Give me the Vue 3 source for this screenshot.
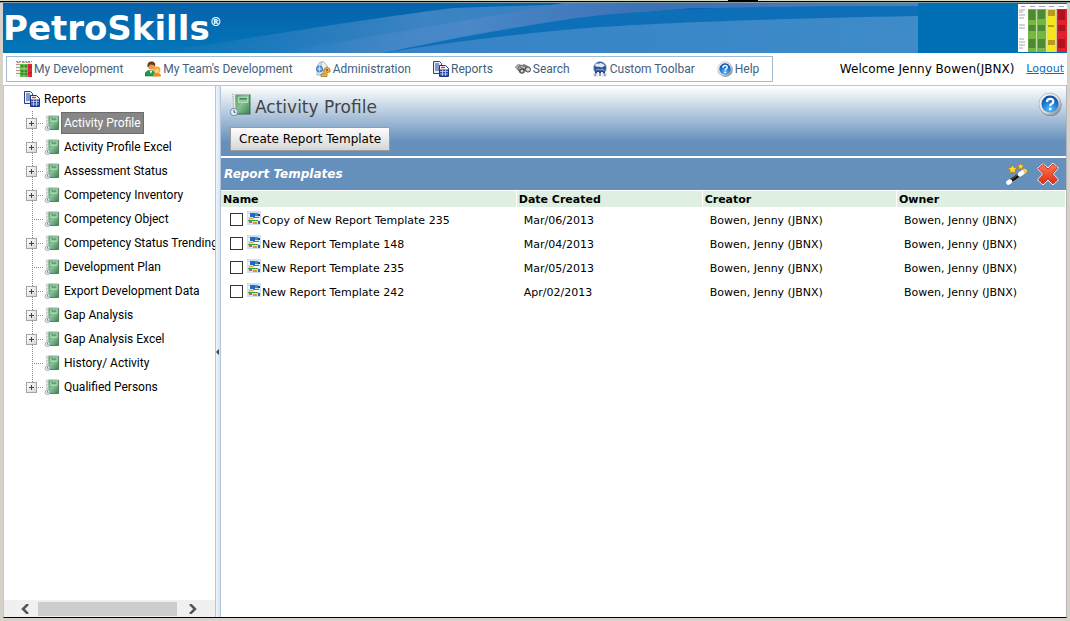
<script setup>
import { ref } from 'vue'

const menu = [
  { label: 'My Development', icon: 'matrix' },
  { label: "My Team's Development", icon: 'team' },
  { label: 'Administration', icon: 'admin' },
  { label: 'Reports', icon: 'reports' },
  { label: 'Search', icon: 'search' },
  { label: 'Custom Toolbar', icon: 'custom' },
  { label: 'Help', icon: 'help' },
]

const tree = [
  { label: 'Activity Profile', more: true },
  { label: 'Activity Profile Excel', more: true },
  { label: 'Assessment Status', more: true },
  { label: 'Competency Inventory', more: true },
  { label: 'Competency Object', more: false },
  { label: 'Competency Status Trending', more: true },
  { label: 'Development Plan', more: false },
  { label: 'Export Development Data', more: true },
  { label: 'Gap Analysis', more: true },
  { label: 'Gap Analysis Excel', more: true },
  { label: 'History/ Activity', more: false },
  { label: 'Qualified Persons', more: true },
]
const selected = ref('Activity Profile')

const rows = ref([
  { name: 'Copy of New Report Template 235', date: 'Mar/06/2013', checked: false },
  { name: 'New Report Template 148', date: 'Mar/04/2013', checked: false },
  { name: 'New Report Template 235', date: 'Mar/05/2013', checked: false },
  { name: 'New Report Template 242', date: 'Apr/02/2013', checked: false },
])
const person = 'Bowen, Jenny (JBNX)'
</script>

<template>
  <div class="frame">
    <svg class="defs" width="0" height="0" aria-hidden="true">
      <defs>
        <linearGradient id="g-book" x1="0" y1="0" x2="1" y2="1">
          <stop offset="0" stop-color="#4f9a68" /><stop offset=".5" stop-color="#86bf92" /><stop offset="1" stop-color="#3a8253" />
        </linearGradient>
        <radialGradient id="g-blue" cx=".5" cy=".8" r=".8">
          <stop offset="0" stop-color="#5cc0fa" /><stop offset=".6" stop-color="#1b75d0" /><stop offset="1" stop-color="#0d4a9c" />
        </radialGradient>
        <linearGradient id="g-ring" x1="0" y1="0" x2="1" y2="1">
          <stop offset="0" stop-color="#ffffff" /><stop offset=".6" stop-color="#d5d9de" /><stop offset="1" stop-color="#6f767e" />
        </linearGradient>
        <linearGradient id="g-red" x1="0" y1="0" x2="0" y2="1">
          <stop offset="0" stop-color="#ff7a58" /><stop offset="1" stop-color="#e02a10" />
        </linearGradient>
        <linearGradient id="g-s1" x1="0" y1="0" x2="0" y2="1">
          <stop offset="0" stop-color="#0562ac" /><stop offset="1" stop-color="#0376b8" />
        </linearGradient>
        <linearGradient id="g-s2" x1="0" y1="0" x2="1" y2="0">
          <stop offset="0" stop-color="#3c84c4" stop-opacity="0" /><stop offset=".5" stop-color="#3c84c4" /><stop offset="1" stop-color="#2a7cc0" />
        </linearGradient>
        <linearGradient id="g-s3" x1="0" y1="0" x2="1" y2="0">
          <stop offset="0" stop-color="#4a8aca" stop-opacity="0" /><stop offset=".3" stop-color="#4a88c8" /><stop offset=".6" stop-color="#3a70b4" /><stop offset="1" stop-color="#4b7fc0" />
        </linearGradient>
        <linearGradient id="g-s4" x1="0" y1="0" x2="1" y2="0">
          <stop offset="0" stop-color="#3583c6" /><stop offset="1" stop-color="#3f8bc9" />
        </linearGradient>
      </defs>

      <symbol id="i-matrix" viewBox="0 0 16 16">
        <rect width="16" height="16" fill="#f3efec" />
        <path d="M0 3.500h4M0 6.500h4M0 9.500h4M0 12.500h4M1 1.500h3M6 1.500h3M10 1.500h4" stroke="#b09a98" />
        <rect x="4" y="3" width="8" height="13" fill="#63b548" />
        <path d="M5 5h6M5 10h6M5 13h6" stroke="#2c7a2c" stroke-width="1.500" />
        <path d="M8 3v13M4 8h8" stroke="#a7dc7c" stroke-width=".6" />
        <rect x="12" y="3" width="4" height="13" fill="#e0263a" />
        <path d="M12.500 6h3M12.500 12h3" stroke="#a3122a" />
        <path d="M0 .5h16" stroke="#a08a84" stroke-dasharray="2 1" />
      </symbol>

      <symbol id="i-team" viewBox="0 0 16 16">
        <path d="M0 15V12l3-2.500h5l2.500 3V15z" fill="#1f9a45" stroke="#0e6a2c" stroke-width=".5" />
        <path d="M4.500 9.500h3L6 13z" fill="#f5e7d0" />
        <circle cx="6.500" cy="5.500" r="3.300" fill="#e79a55" />
        <path d="M2.500 6C2 2 4 .5 6.500.5S11 2 10 6L9 4 5 3.500 3.500 6z" fill="#6d3717" />
        <path d="M8 15.500c0-3 1-4 3.500-4s4.500 1 4.500 4z" fill="#f08b1e" />
        <circle cx="12" cy="9" r="3.400" fill="#f4ac2e" />
        <circle cx="12" cy="10" r="2.100" fill="#fbcf96" />
      </symbol>

      <symbol id="i-admin" viewBox="0 0 16 16">
        <path d="M2 14V5l3-4h3v13z" fill="#dbe4ef" stroke="#8b9bb0" stroke-width=".7" />
        <path d="M6 2.500 8.500.5l3.500 4v5H7z" fill="#eef2f7" stroke="#8b98a9" stroke-width=".7" />
        <circle cx="4.500" cy="8" r="3" fill="#58a8ea" stroke="#2669b4" stroke-width=".8" />
        <path d="M4.500 5.500v5M2.500 8h4M9 3v5" stroke="#d8efff" stroke-width=".8" />
        <path d="m9 8 3-2 3 2v3l-3 .5v4H6V13h3z" fill="#eeb13f" stroke="#9a6a20" stroke-width=".7" />
        <circle cx="12" cy="9" r="1" fill="#7b5520" />
      </symbol>

      <symbol id="i-reports" viewBox="0 0 16 16">
        <path d="M.5.5h6l2 2v10h-8z" fill="#e7effa" stroke="#27408b" />
        <path d="M2 3h4M2 5h5M2 7h5M2 9h5" stroke="#27408b" />
        <path d="M6.500 4.500h6l3 3v8h-9z" fill="#fff" stroke="#1c3484" />
        <path d="M8 6.500h4" stroke="#d8403a" stroke-width="1.500" />
        <path d="M7 8.500h8V15H7z" fill="#2747a0" />
        <path d="M9.500 9v6M12.500 9v6M7 10.500h8M7 13h8" stroke="#dbe7fb" stroke-width=".7" />
      </symbol>

      <symbol id="i-search" viewBox="0 0 16 16">
        <path d="m0 6 3-3 4 1 2-1 4 2 2 3-1 3-5-1-4 2z" fill="#7a7a7a" />
        <path d="m2 5.500 2-1.500M6 5.500l4 1.500M4 7l3 1" stroke="#d8d8d8" />
        <circle cx="7" cy="10" r="2.700" fill="#444" /><circle cx="7" cy="10" r="1.500" fill="#d0d6dc" />
        <circle cx="13" cy="8.500" r="2.900" fill="#555" /><circle cx="13" cy="8.500" r="1.900" fill="#cfe0ea" />
        <circle cx="1.800" cy="6" r="1.500" fill="#a9a9a9" />
      </symbol>

      <symbol id="i-custom" viewBox="0 0 16 16">
        <circle cx="8" cy="7" r="6.500" fill="#2d5099" stroke="#b4c0d0" />
        <path d="M3 4c2-3 4 0 5-2 2 0 4 1 5 3-3 1-3 2-5 1S4 7 3 4z" fill="#dfe8f5" />
        <path d="m4 9 2-1 2 1 3-1 1 2" fill="none" stroke="#8faedb" />
        <path d="M1 16v-4l2-1h10l2 1v4z" fill="#eceff4" />
        <path d="M4 11.500 3 15M8 11v4M12 11.500l1 3.500" stroke="#8797b3" stroke-width="1.800" />
        <path d="M4 10.500v1.500M8 10.500v1.500M12 10.500v1.500" stroke="#27417b" stroke-width="2" />
      </symbol>

      <symbol id="i-help" viewBox="0 0 24 24">
        <circle cx="12.500" cy="13" r="11" fill="#59616a" opacity=".75" />
        <circle cx="12" cy="12" r="11" fill="url(#g-ring)" stroke="#a5abb2" stroke-width=".7" />
        <circle cx="12" cy="12" r="8.500" fill="url(#g-blue)" />
        <path d="M9 10q0-3.200 3.200-3.200T15.300 9.500q0 1.500-1.700 2.400-1.400.8-1.400 2.200" fill="none" stroke="#fff" stroke-width="2.200" />
        <circle cx="12.200" cy="17" r="1.400" fill="#fff" />
      </symbol>

      <symbol id="i-book" viewBox="0 0 20 22">
        <path d="M4 1h15v19H4z" fill="url(#g-book)" />
        <path d="M4 1.500h15" stroke="#a9bfae" />
        <path d="M19 1.500V20H5" fill="none" stroke="#2f6a44" />
        <path d="M1.500 1H5v19H1.500z" fill="#e6ebe7" />
        <path d="M3 1v19" stroke="#a3aca5" stroke-width="1.500" stroke-dasharray="1 1" />
        <path d="M8 4h9v5H8z" fill="#93c79e" stroke="#c4e3c8" stroke-width=".8" />
        <path d="M9 5.500h7" stroke="#3c8654" stroke-width="1.500" />
        <circle cx="3.800" cy="18.200" r="3.300" fill="#e9f0fa" stroke="#7f95b8" />
        <path d="M3.800 16.200v2.300h1.500" fill="none" stroke="#334a75" stroke-width=".9" />
      </symbol>

      <symbol id="i-template" viewBox="0 0 14 14">
        <path d="M0 0h14v14H0z" fill="#cfe0f2" />
        <path d="M3 2h5v4H3z" fill="#2467c4" /><path d="M8 2h3v3H8z" fill="#3a86d9" />
        <path d="M11 3h2v2h-2z" fill="#253e70" />
        <path d="M1 3h2v3H1z" fill="#f0f5fa" />
        <path d="M2 7h4v1H2z" fill="#e7a21c" /><path d="M6 6h6v1H6z" fill="#379f3b" />
        <path d="M1 9h10v1H1z" fill="#2d9f55" /><path d="M8 7h5v2H8z" fill="#fff" />
        <path d="M2 10h3v2H2z" fill="#e8543a" /><path d="M6 11h4v2H6z" fill="#e89524" />
        <path d="M11 10h2v3h-2z" fill="#2467c4" />
      </symbol>

      <symbol id="i-wand" viewBox="0 0 24 24">
        <path d="m3 21 17-12" stroke="#f0f0f0" stroke-width="5" stroke-linecap="round" />
        <path d="m5 19.500 10-7" stroke="#151515" stroke-width="4.500" />
        <path d="m6 17.500 8-5.600" stroke="#707070" stroke-width="1" />
        <path d="m2.500 21.500 2-1.500M15 12.500l3.500-2.500" stroke="#fff" stroke-width="4.500" stroke-linecap="round" />
        <path d="m7 2 1.700 3 3.300.3-2.200 2.500.7 3.400L7.300 9.800 4 11.200l.6-3.500L2 5.600 5.500 5z" fill="#ffd83c" stroke="#b07a14" stroke-width=".8" />
        <path d="m16 0 1 2.300 2.600.2-1.800 1.900.5 2.600-2.300-1.200L13.700 7l.5-2.600-1.700-1.800 2.400-.4z" fill="#ffd83c" stroke="#b07a14" stroke-width=".7" />
        <path d="m21.500 6 .8 1.500 1.500.3-1.100 1.200.2 1.600-1.500-.7-1.500.7.300-1.600L19 7.800l1.700-.3z" fill="#ffe05a" stroke="#b07a14" stroke-width=".5" />
      </symbol>

      <symbol id="i-delete" viewBox="0 0 22 22">
        <path d="M1.500 5.500 6 1.500l5 4.500 5-5 4.500 4-5 6 5 6-4.500 4-5-5-5 5-4.500-4 5-6z" fill="url(#g-red)" stroke="#fff" stroke-width="2" stroke-linejoin="round" />
        <path d="M1.500 5.500 6 1.500l5 4.500 5-5 4.500 4-5 6 5 6-4.500 4-5-5-5 5-4.500-4 5-6z" fill="url(#g-red)" stroke="#e04a34" stroke-linejoin="round" />
        <path d="M1.500 5.500 6 1.500l5 4.500 5-5 4.500 4-5 6 5 6-4.500 4-5-5-5 5-4.500-4 5-6z" fill="none" stroke="#a81810" stroke-dasharray="1 2" />
      </symbol>
    </svg>

    <div class="edge"><span class="mark"></span></div>

    <header class="banner">
      <svg class="sweep" viewBox="0 0 914 50" preserveAspectRatio="none" aria-hidden="true">
        <path d="M0 0h914v50H0z" fill="url(#g-s1)" />
        <path d="M140 50C250 36 330 20 450 5L600 0H700L400 50z" fill="url(#g-s2)" />
        <path d="M270 50C380 32 480 14 560 0H914V4L689 5 560 16 464 32 380 50z" fill="url(#g-s3)" />
        <path d="M380 50Q464 32 560 17T914 3V50z" fill="#0c6fb7" />
        <path d="M380 50Q464 36 560 27T914 13V50z" fill="url(#g-s4)" />
      </svg>
      <div class="logo">PetroSkills<sup>®</sup></div>
      <svg class="chart" viewBox="0 0 49 48" aria-hidden="true">
        <path d="M0 0h49v48H0z" fill="#fff" />
        <path d="M10 5h18v43H10z" fill="#76b744" />
        <path d="M28 5h10v43H28z" fill="#f5e51b" /><path d="M38 5h11v43H38z" fill="#e3202c" />
        <path d="M18.500 5v43M28.500 5v43M38.500 5v43" stroke="#d6e8b0" stroke-width=".8" />
        <path d="M10.500 6h7v10h-7zm0 15h7v6h-7zm0 14h7v9h-7zM20 6h7v9h-7zm0 15h7v6h-7zm0 14h7v9h-7z" fill="#4c8a35" />
        <path d="M30 6h7v6h-7zm0 15h6v2h-6zm0 15h7v5h-7z" fill="#b99a1c" />
        <path d="M40 6h7v10h-7zm0 15h7v6h-7zm0 14h7v9h-7z" fill="#ad1420" />
        <path d="M1 6h6M1 8h4M1 11h6M1 14h5M1 21h6M1 24h6M1 35h5M1 38h6M1 41h6M1 44h4M3 2.500h4M12 2.500h5M21 2.500h6M31 2.500h5M41 2.500h5" stroke="#a8a4b0" />
      </svg>
    </header>

    <div class="topbar">
      <nav class="menu">
        <a v-for="m in menu" :key="m.label" href="#">
          <svg aria-hidden="true"><use :href="'#i-' + m.icon" /></svg>{{ m.label }}
        </a>
      </nav>
      <div class="user"><span>Welcome Jenny Bowen(JBNX)</span><a href="#">Logout</a></div>
    </div>

    <div class="body">
      <aside class="side">
        <div class="treebox">
          <div class="root"><svg aria-hidden="true"><use href="#i-reports" /></svg>Reports</div>
          <ul class="tree">
            <li v-for="t in tree" :key="t.label">
              <span class="twig"><button v-if="t.more" type="button" class="plus" :aria-label="'Expand ' + t.label"></button></span>
              <svg aria-hidden="true"><use href="#i-book" /></svg>
              <a href="#" :class="{ on: selected === t.label }" @click.prevent="selected = t.label">{{ t.label }}</a>
            </li>
          </ul>
        </div>
        <div class="scroll">
          <button type="button" aria-label="Scroll left"><svg viewBox="0 0 10 10"><path d="M8 0 3 5l5 5" /></svg></button>
          <span class="track"><span class="thumb"></span></span>
          <button type="button" aria-label="Scroll right"><svg viewBox="0 0 10 10"><path d="m2 0 5 5-5 5" /></svg></button>
        </div>
      </aside>
      <div class="splitter"><span></span></div>

      <main class="main">
        <section class="head">
          <div class="titles">
            <h1><svg aria-hidden="true"><use href="#i-book" /></svg>Activity Profile</h1>
            <button type="button" class="create">Create Report Template</button>
          </div>
          <button type="button" class="icon helpbtn" aria-label="Help"><svg><use href="#i-help" /></svg></button>
        </section>
        <section class="bar">
          <h2>Report Templates</h2>
          <button type="button" class="icon" aria-label="New template"><svg><use href="#i-wand" /></svg></button>
          <button type="button" class="icon" aria-label="Delete"><svg><use href="#i-delete" /></svg></button>
        </section>
        <table>
          <colgroup><col class="c1" /><col class="c2" /><col class="c3" /><col /></colgroup>
          <thead><tr><th>Name</th><th>Date Created</th><th>Creator</th><th>Owner</th></tr></thead>
          <tbody>
            <tr v-for="r in rows" :key="r.name">
              <td>
                <label><input v-model="r.checked" type="checkbox" /><svg aria-hidden="true"><use href="#i-template" /></svg><span>{{ r.name }}</span></label>
              </td>
              <td>{{ r.date }}</td>
              <td>{{ person }}</td>
              <td>{{ person }}</td>
            </tr>
          </tbody>
        </table>
      </main>
    </div>
  </div>
</template>

<style>
html, body { background: #d6d2c9; }
</style>

<style scoped>
* { box-sizing: border-box; }
.frame {
  min-height: 100vh;
  display: flex;
  flex-direction: column;
  padding: 0 3px 3px 3px;
  background: #d6d2c9;
  color: #000;
  font: 11px/16px "DejaVu Sans", Verdana, sans-serif;
}
.defs { position: absolute; }
a { text-decoration: none; color: inherit; }
button { font: inherit; padding: 0; border: 0; background: none; }
.edge { height: 3px; margin: 0 -3px; border-bottom: 1px solid #8d9aa0; background: linear-gradient(#d5dcc8 1px, #000 1px); }
.mark { display: block; width: 30px; height: 2px; margin-left: 68%; background: #000; }

.banner { position: relative; height: 50px; display: flex; justify-content: space-between; background: #0070b4; }
.sweep { position: absolute; left: 0; top: 0; width: 86%; height: 100%; }
.logo { position: relative; display: flex; align-items: flex-start; color: #fff; font: bold 34px/50px "DejaVu Sans", sans-serif; }
.logo sup { font-size: 12px; line-height: 38px; }
.chart { position: relative; width: 49px; height: 48px; margin: 1px 0 0; }

.topbar { display: flex; align-items: center; justify-content: space-between; height: 32px; padding: 0 3px; background: #fff; }
.menu { display: flex; height: 26px; border: 1px solid #a3bbd0; color: #44607c; font: 12px/24px Roboto, "Noto Sans", sans-serif; }
.menu a { display: flex; align-items: center; gap: 2px; padding: 0 13px 0 9px; }
.menu svg { width: 16px; height: 16px; }
.user { display: flex; gap: 12px; font-size: 12px; }
.user a { color: #0a6cc4; font-size: 11px; text-decoration: underline; }

.body { flex: 1; display: flex; background: #fff; border-top: 1px solid #b9c7d3; border-bottom: 1px solid #000; border-left: 1px solid #c0c8d0; border-right: 1px solid #b5b5b8; }
.side { width: 211px; flex: none; display: flex; flex-direction: column; overflow: hidden; font: 12px/20px Roboto, "Noto Sans", sans-serif; }
.treebox { flex: 1; padding: 1px 0 0 20px; overflow: hidden; white-space: nowrap; }
.root { display: flex; align-items: center; gap: 4px; height: 24px; }
.root svg { width: 16px; height: 16px; }
.tree { margin: 0; padding: 0 0 0 2px; list-style: none; }
.tree li { display: flex; align-items: center; height: 24px; }
.tree li > * { flex: none; }
.tree svg { width: 16px; height: 16px; margin-right: 1px; }
.twig {
  width: 18px; height: 24px; display: flex; align-items: center;
  background:
    repeating-linear-gradient(#8a8a8a 0 1px, transparent 1px 2px) 6px 0 / 1px 100% no-repeat,
    repeating-linear-gradient(90deg, #8a8a8a 0 1px, transparent 1px 2px) 6px 12px / 11px 1px no-repeat;
}
.tree li:last-child .twig {
  background:
    repeating-linear-gradient(#8a8a8a 0 1px, transparent 1px 2px) 6px 0 / 1px 50% no-repeat,
    repeating-linear-gradient(90deg, #8a8a8a 0 1px, transparent 1px 2px) 6px 12px / 11px 1px no-repeat;
}
.plus {
  width: 11px; height: 11px; border: 1px solid #a5a5a5;
  background:
    linear-gradient(#444, #444) center / 5px 1px no-repeat,
    linear-gradient(#444, #444) center / 1px 5px no-repeat,
    linear-gradient(135deg, #fff, #d5d5d5);
}
.tree a { padding: 0 2px; border: 1px solid transparent; }
.tree a.on { color: #fff; background: #868686; border-color: #6c6c6c; }
.scroll { display: flex; align-items: center; height: 17px; background: #f0f0f0; }
.scroll button { width: 34px; height: 17px; display: flex; align-items: center; justify-content: center; }
.scroll button:first-child { padding-left: 8px; }
.scroll button:last-child { width: 38px; padding-right: 6px; }
.scroll svg { width: 10px; height: 10px; fill: none; stroke: #555; stroke-width: 2.5; }
.track { flex: 1; height: 14px; }
.thumb { display: block; height: 14px; background: #cdcdcd; }
.splitter { width: 6px; flex: none; display: flex; align-items: center; border: solid #b6c6d8; border-width: 0 1px; background: linear-gradient(90deg, #eef4fb, #d5e4f3); }
.splitter span { border: 3px solid transparent; border-right-color: #33475c; border-left: 0; }

.main { flex: 1; min-width: 0; }
.head { display: flex; justify-content: space-between; height: 70px; padding: 6px 4px 0 9px; background: linear-gradient(#fff, #6590bb 80%); }
.titles { display: flex; flex-direction: column; align-items: flex-start; gap: 5px; }
h1 { display: flex; align-items: center; gap: 4px; height: 30px; margin: 0; color: #444; font-size: 17px; font-weight: normal; line-height: 30px; }
h1 svg { width: 21px; height: 23px; margin-top: -6px; }
.create { height: 24px; padding: 0 8px; border: 1px solid #9b9b9b; background: linear-gradient(#fdfdfd, #d6d6d6); color: #000; font-size: 12px; }
.icon { display: flex; }
.helpbtn svg { width: 24px; height: 24px; }
.bar { display: flex; align-items: center; gap: 9px; height: 32px; margin-top: 2px; padding: 0 7px 0 3px; background: #6590bb; }
.bar svg { width: 22px; height: 22px; }
h2 { flex: 1; margin: 0; color: #fff; font-size: 12px; font-style: italic; }

table { width: 100%; table-layout: fixed; border-spacing: 0; }
.c1 { width: 35%; }
.c2 { width: 22%; }
.c3 { width: 23%; }
th { height: 17px; padding: 0 2px; border-top: 1px solid #fff; border-right: 1px solid #fff; background: #dff0e2; text-align: left; line-height: 15px; }
td { height: 24px; padding: 3px 7px 0; }
td:first-child { padding: 0 9px; }
label { display: flex; align-items: center; line-height: 20px; }
label span { padding-top: 4px; }
label svg { width: 14px; height: 14px; margin: -3px 1px 0 4px; }
input { appearance: none; width: 13px; height: 13px; margin: 0; border: 1px solid #333; background: #fff; }
input:checked { background: #33475c; }
</style>
